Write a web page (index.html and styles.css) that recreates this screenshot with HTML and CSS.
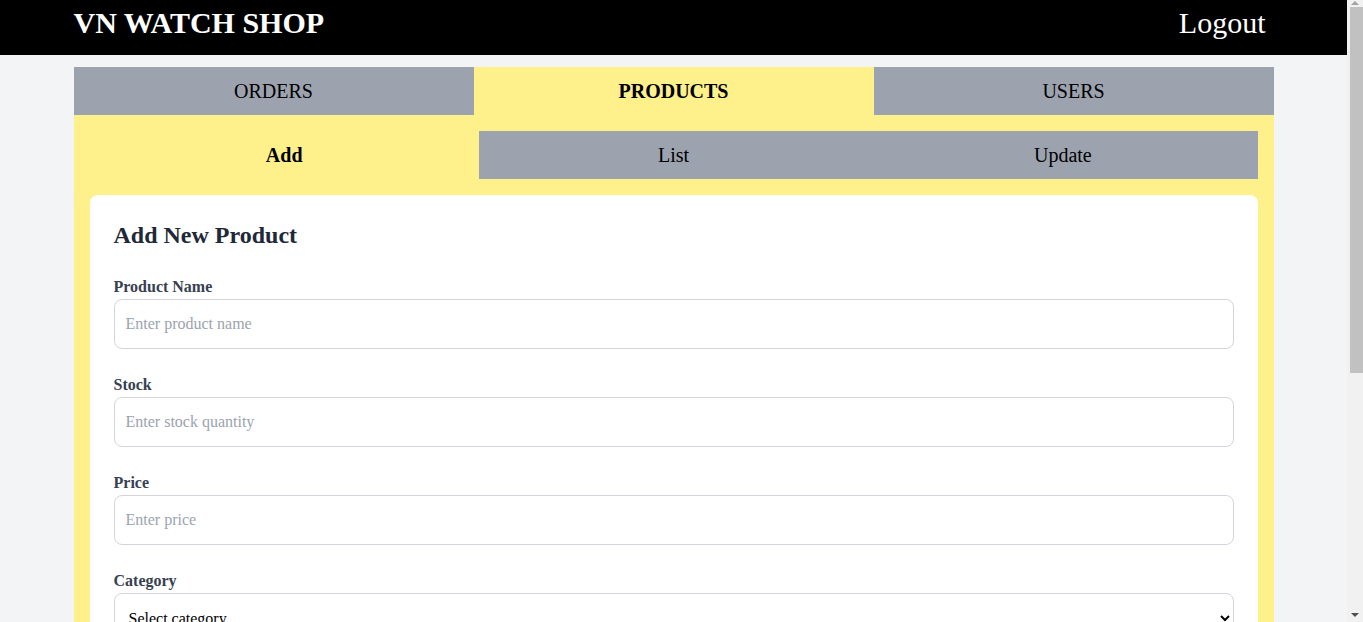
FILE: index.html
```html
<!DOCTYPE html>
<html lang="en">
<head>
<meta charset="utf-8">
<title>VN Watch Shop - Admin</title>
<link rel="stylesheet" href="styles.css">
</head>
<body>
<div class="app">
  <header class="topbar">
    <div class="topbar-inner">
      <h1 class="brand">VN WATCH SHOP</h1>
      <a class="logout" href="#">Logout</a>
    </div>
  </header>
  <main class="container">
    <nav class="tabs">
      <a class="tab" href="#">ORDERS</a>
      <a class="tab tab-active" href="#">PRODUCTS</a>
      <a class="tab" href="#">USERS</a>
    </nav>
    <section class="panel">
      <nav class="subtabs">
        <a class="subtab subtab-active" href="#">Add</a>
        <a class="subtab" href="#">List</a>
        <a class="subtab" href="#">Update</a>
      </nav>
      <div class="card">
        <h2 class="card-title">Add New Product</h2>
        <form class="form">
          <div class="field">
            <label class="label" for="name">Product Name</label>
            <input class="input" id="name" type="text" placeholder="Enter product name">
          </div>
          <div class="field">
            <label class="label" for="stock">Stock</label>
            <input class="input" id="stock" type="number" placeholder="Enter stock quantity">
          </div>
          <div class="field">
            <label class="label" for="price">Price</label>
            <input class="input" id="price" type="number" placeholder="Enter price">
          </div>
          <div class="field">
            <label class="label" for="category">Category</label>
            <select class="input select" id="category">
              <option>Select category</option>
              <option>Men</option>
              <option>Women</option>
            </select>
          </div>
          <div class="field">
            <label class="label" for="desc">Description</label>
            <textarea class="input textarea" id="desc" placeholder="Enter product description"></textarea>
          </div>
          <div class="field">
            <label class="label" for="image">Image URL</label>
            <input class="input" id="image" type="text" placeholder="Enter image URL">
          </div>
          <button class="submit" type="button">Add Product</button>
        </form>
      </div>
    </section>
  </main>
</div>
<div class="scrollbar" aria-hidden="true">
  <span class="scroll-arrow scroll-arrow-up"></span>
  <span class="scroll-thumb"></span>
  <span class="scroll-spacer"></span>
  <span class="scroll-arrow scroll-arrow-down"></span>
</div>
</body>
</html>
```
FILE: styles.css
```css
html, body {
  margin: 0;
  padding: 0;
}

body {
  display: flex;
  align-items: flex-start;
  background: #f3f4f6;
  font-family: "Liberation Serif", "Times New Roman", serif;
  color: #000;
}

.app {
  flex: 1;
  min-width: 0;
}

/* window scrollbar as seen in the screenshot */
.scrollbar {
  position: sticky;
  top: 0;
  width: 16px;
  height: 100vh;
  flex: none;
  background: #f1f1f1;
  display: flex;
  flex-direction: column;
  align-items: center;
}

.scroll-arrow {
  width: 0;
  height: 0;
  border-left: 4px solid transparent;
  border-right: 4px solid transparent;
  margin: 3px 0;
}

.scroll-arrow-up {
  border-bottom: 4px solid #a3a3a3;
  margin-top: 1px;
  margin-bottom: 2px;
}

.scroll-arrow-down {
  border-top: 4px solid #505050;
  margin-bottom: 5px;
}

.scroll-thumb {
  width: 13px;
  height: 366px;
  margin-left: 2px;
  background: #c1c1c1;
}

.scroll-spacer {
  flex: 1;
}

.topbar {
  background: #000;
  color: #fff;
  height: 55px;
}

.topbar-inner {
  width: 1200px;
  margin: 0 auto;
  display: flex;
  justify-content: space-between;
  align-items: flex-start;
  padding-top: 6px;
}

.brand {
  margin: 0;
  font-size: 30px;
  font-weight: 700;
  line-height: normal;
}

.logout {
  color: #fff;
  text-decoration: none;
  font-size: 30px;
  line-height: normal;
  margin-right: 8px;
}

.container {
  width: 1200px;
  margin: 12px auto 0;
}

.tabs {
  display: grid;
  grid-template-columns: repeat(3, 1fr);
}

.tab {
  height: 48px;
  display: flex;
  align-items: center;
  justify-content: center;
  background: #9ca3af;
  color: #000;
  text-decoration: none;
  font-size: 20px;
}

.tab-active {
  background: #fef08a;
  font-weight: 700;
}

.panel {
  background: #fef08a;
  padding: 16px;
}

.subtabs {
  display: grid;
  grid-template-columns: repeat(3, 1fr);
  margin-bottom: 16px;
}

.subtab {
  height: 48px;
  display: flex;
  align-items: center;
  justify-content: center;
  background: #9ca3af;
  color: #000;
  text-decoration: none;
  font-size: 20px;
}

.subtab-active {
  background: #fef08a;
  font-weight: 700;
}

.card {
  background: #fff;
  border-radius: 8px;
  padding: 24px;
}

.card-title {
  margin: 0 0 24px;
  font-size: 24px;
  line-height: 32px;
  font-weight: 700;
  color: #1f2937;
}

.field {
  margin-bottom: 24px;
}

.label {
  display: block;
  font-size: 16px;
  line-height: 24px;
  font-weight: 700;
  color: #374151;
}

.input {
  display: block;
  box-sizing: border-box;
  width: 100%;
  height: 50px;
  padding: 0 11px;
  border: 1px solid #d1d5db;
  border-radius: 8px;
  background: #fff;
  font-family: "Liberation Serif", "Times New Roman", serif;
  font-size: 16px;
  color: #111827;
  outline: none;
}

.input::placeholder {
  color: #9ca3af;
}

.select {
  color: #000;
  padding: 0 10px;
}

.textarea {
  height: 90px;
  padding: 12px 11px;
  resize: vertical;
}

.submit {
  height: 48px;
  padding: 0 24px;
  border: none;
  border-radius: 8px;
  background: #000;
  color: #fff;
  font-family: "Liberation Serif", "Times New Roman", serif;
  font-size: 18px;
  font-weight: 700;
}
```
